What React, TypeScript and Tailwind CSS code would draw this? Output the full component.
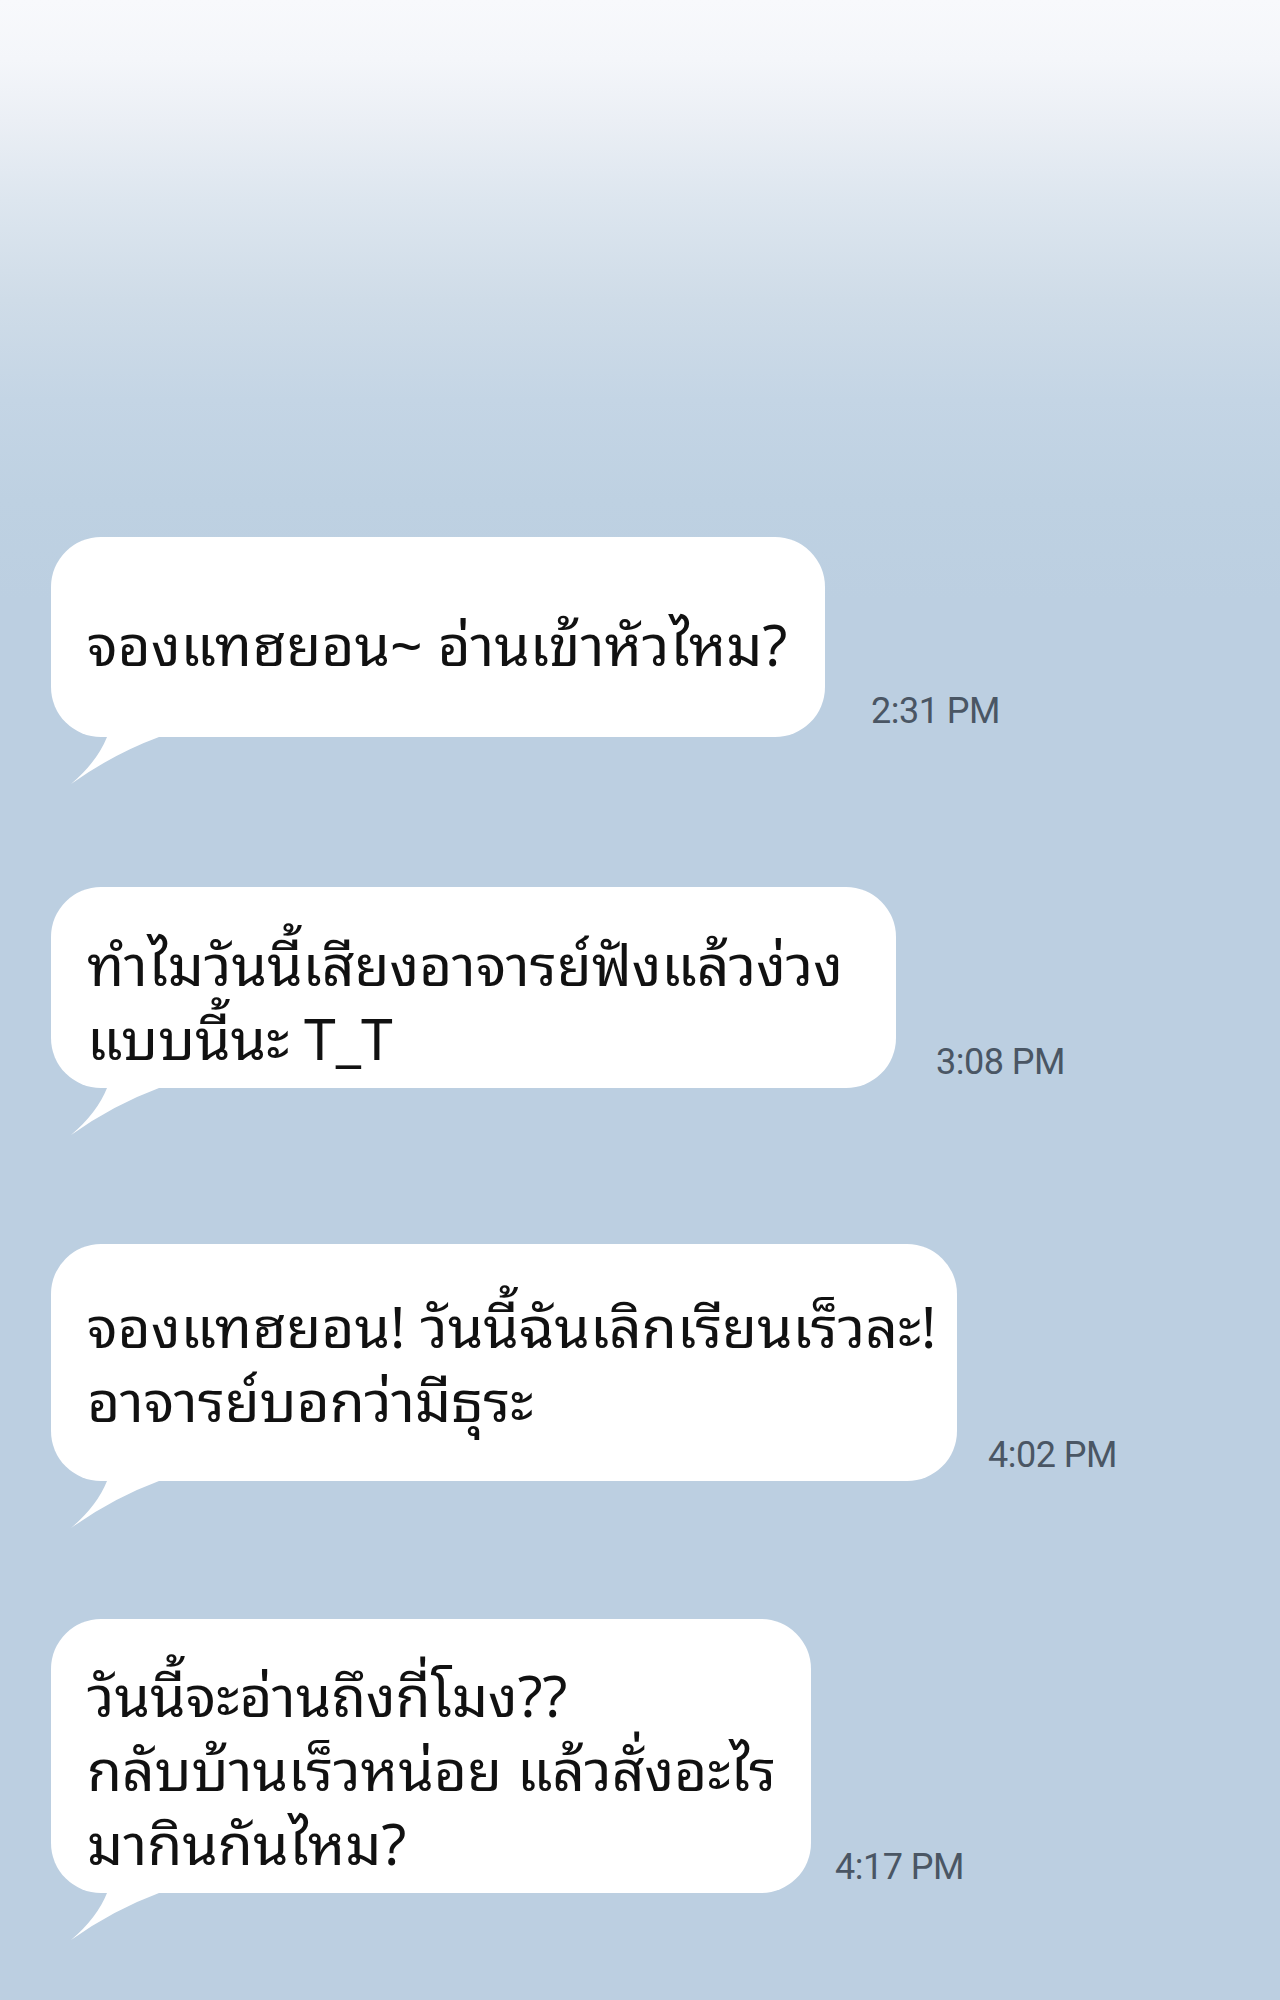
import React from 'react'

type Msg = {
  lines: string[]
  time: string
  box: string // bubble size
  gap: string // space between bubble and time
  top: string // space above the row
}

const MESSAGES: Msg[] = [
  {
    lines: ['จองแทฮยอน~ อ่านเข้าหัวไหม?'],
    time: '2:31 PM',
    box: 'w-[774px] h-[200px] pt-[8px]',
    gap: 'ml-[46px]',
    top: 'mt-[537px]',
  },
  {
    lines: ['ทำไมวันนี้เสียงอาจารย์ฟังแล้วง่วง', 'แบบนี้นะ T_T'],
    time: '3:08 PM',
    box: 'w-[845px] h-[201px] pt-[20px]',
    gap: 'ml-[40px]',
    top: 'mt-[150px]',
  },
  {
    lines: ['จองแทฮยอน! วันนี้ฉันเลิกเรียนเร็วละ!', 'อาจารย์บอกว่ามีธุระ'],
    time: '4:02 PM',
    box: 'w-[906px] h-[237px] pb-[6px]',
    gap: 'ml-[31px]',
    top: 'mt-[156px]',
  },
  {
    lines: ['วันนี้จะอ่านถึงกี่โมง??', 'กลับบ้านเร็วหน่อย แล้วสั่งอะไร', 'มากินกันไหม?'],
    time: '4:17 PM',
    box: 'w-[760px] h-[274px] pt-[20px]',
    gap: 'ml-[24px]',
    top: 'mt-[138px]',
  },
]

// little curved tail hanging off the bottom-left corner
function Tail() {
  return (
    <svg
      className="absolute left-0 top-full -mt-[3px]"
      width="120"
      height="52"
      viewBox="0 0 120 52"
    >
      <path d="M48 0 L108 0 L108 3 Q62 20 20 50 Q46 28 56 3 Z" fill="#ffffff" />
    </svg>
  )
}

function Bubble({ msg }: { msg: Msg }) {
  return (
    <div className={`flex items-end ${msg.top}`}>
      <div
        className={`relative flex flex-col justify-center bg-white rounded-[50px] pl-[36px] pr-[24px] shrink-0 ${msg.box}`}
      >
        <p
          className="whitespace-nowrap text-[57px] font-normal leading-[74px] text-[#111111]"
          style={{
            fontFamily:
              '"Noto Sans Thai Looped", "Noto Sans Thai UI", Garuda, Loma, "Noto Sans Thai", "Noto Sans", sans-serif',
          }}
        >
          {msg.lines.map((line, i) => (
            <React.Fragment key={i}>
              {i > 0 && <br />}
              {line}
            </React.Fragment>
          ))}
        </p>
        <Tail />
      </div>
      <span
        className={`mb-[8px] whitespace-nowrap text-[36px] leading-none text-[#4a5664] tracking-[-0.5px] ${msg.gap}`}
        style={{ fontFamily: 'Roboto, "Liberation Sans", sans-serif' }}
      >
        {msg.time}
      </span>
    </div>
  )
}

export default function App() {
  return (
    <div className="w-[1280px] min-h-[2000px] pl-[51px] pb-[107px] bg-[linear-gradient(180deg,#f8f9fc_0px,#f4f6fa_60px,#ebeff5_120px,#dde6ef_200px,#cfdce8_300px,#c4d5e5_400px,#bed1e2_500px,#bccfe1_600px,#bccfe1_100%)] flex flex-col">
      {MESSAGES.map((m, i) => (
        <Bubble key={i} msg={m} />
      ))}
    </div>
  )
}
